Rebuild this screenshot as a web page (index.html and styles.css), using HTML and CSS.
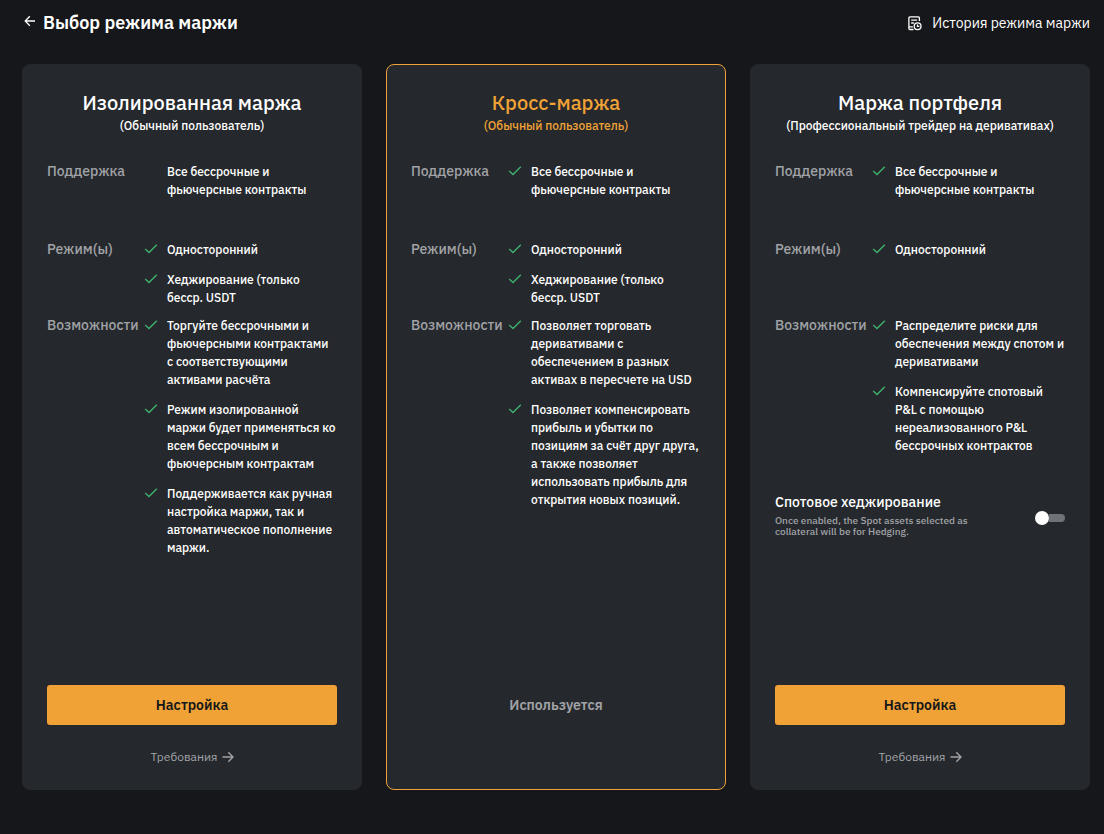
FILE: index.html
```html
<!DOCTYPE html>
<html lang="ru">
<head>
<meta charset="utf-8">
<meta name="viewport" content="width=device-width, initial-scale=1">
<title>Выбор режима маржи</title>
<link rel="stylesheet" href="styles.css">
</head>
<body>
<svg class="sprite" aria-hidden="true">
  <symbol id="check" viewBox="0 0 14 12"><path d="M1.2 6 5 9.6 12.8 1.8" fill="none" stroke="currentColor" stroke-width="1.4"/></symbol>
  <symbol id="arrow" viewBox="0 0 12 12"><path d="M.5 6h10.3M6.3 1.2 11 6 6.3 10.8" fill="none" stroke="currentColor" stroke-width="1.4"/></symbol>
</svg>
<header class="header">
  <div class="heading">
    <button class="back" type="button" aria-label="Назад"><svg viewBox="0 0 12 12"><path d="M11 6H1.4M5.8 1.2 1.2 6l4.6 4.8" fill="none" stroke="currentColor" stroke-width="1.3"/></svg></button>
    <h1 class="title">Выбор режима маржи</h1>
  </div>
  <a class="history" href="#history">
    <svg class="history-icon" viewBox="0 0 14 15" fill="none" stroke="currentColor" stroke-width="1.3"><path d="M11.4 5V1.9a1 1 0 0 0-1-1H1.9a1 1 0 0 0-1 1v10.6a1 1 0 0 0 1 1h3.6M.9 10.8h4M3.2 4.2h5.9M3.2 7h2.6"/><circle cx="9.6" cy="10.2" r="3.4"/><path d="M9.5 8.4v2h1.8"/></svg>
    История режима маржи
  </a>
</header>
<main class="cards">
  <section class="card">
    <h2 class="card-title">Изолированная маржа</h2>
    <p class="card-sub">(Обычный пользователь)</p>
    <div class="row row-support"><h3 class="label">Поддержка</h3><ul class="list"><li class="item">Все бессрочные и<br>фьючерсные контракты</li></ul></div>
    <div class="row row-modes"><h3 class="label">Режим(ы)</h3><ul class="list">
      <li class="item"><svg class="check"><use href="#check"/></svg>Односторонний</li>
      <li class="item"><svg class="check"><use href="#check"/></svg>Хеджирование (только<br>бесср. USDT</li></ul></div>
    <div class="row"><h3 class="label">Возможности</h3><ul class="list">
      <li class="item"><svg class="check"><use href="#check"/></svg>Торгуйте бессрочными и<br>фьючерсными контрактами<br>с соответствующими<br>активами расчёта</li>
      <li class="item"><svg class="check"><use href="#check"/></svg>Режим изолированной<br>маржи будет применяться ко<br>всем бессрочным и<br>фьючерсным контрактам</li>
      <li class="item"><svg class="check"><use href="#check"/></svg>Поддерживается как ручная<br>настройка маржи, так и<br>автоматическое пополнение<br>маржи.</li></ul></div>
    <footer class="card-footer">
      <button class="action" type="button">Настройка</button>
      <a class="more" href="#requirements">Требования<svg class="arrow"><use href="#arrow"/></svg></a>
    </footer>
  </section>
  <section class="card active">
    <h2 class="card-title">Кросс-маржа</h2>
    <p class="card-sub">(Обычный пользователь)</p>
    <div class="row row-support"><h3 class="label">Поддержка</h3><ul class="list"><li class="item"><svg class="check"><use href="#check"/></svg>Все бессрочные и<br>фьючерсные контракты</li></ul></div>
    <div class="row row-modes"><h3 class="label">Режим(ы)</h3><ul class="list">
      <li class="item"><svg class="check"><use href="#check"/></svg>Односторонний</li>
      <li class="item"><svg class="check"><use href="#check"/></svg>Хеджирование (только<br>бесср. USDT</li></ul></div>
    <div class="row"><h3 class="label">Возможности</h3><ul class="list">
      <li class="item"><svg class="check"><use href="#check"/></svg>Позволяет торговать<br>деривативами с<br>обеспечением в разных<br>активах в пересчете на USD</li>
      <li class="item"><svg class="check"><use href="#check"/></svg>Позволяет компенсировать<br>прибыль и убытки по<br>позициям за счёт друг друга,<br>а также позволяет<br>использовать прибыль для<br>открытия новых позиций.</li></ul></div>
    <footer class="card-footer">
      <button class="action current" type="button" disabled>Используется</button>
    </footer>
  </section>
  <section class="card">
    <h2 class="card-title">Маржа портфеля</h2>
    <p class="card-sub">(Профессиональный трейдер на деривативах)</p>
    <div class="row row-support"><h3 class="label">Поддержка</h3><ul class="list"><li class="item"><svg class="check"><use href="#check"/></svg>Все бессрочные и<br>фьючерсные контракты</li></ul></div>
    <div class="row row-modes"><h3 class="label">Режим(ы)</h3><ul class="list">
      <li class="item"><svg class="check"><use href="#check"/></svg>Односторонний</li></ul></div>
    <div class="row"><h3 class="label">Возможности</h3><ul class="list">
      <li class="item"><svg class="check"><use href="#check"/></svg>Распределите риски для<br>обеспечения между спотом и<br>деривативами</li>
      <li class="item"><svg class="check"><use href="#check"/></svg>Компенсируйте спотовый<br>P&amp;L с помощью<br>нереализованного P&amp;L<br>бессрочных контрактов</li></ul></div>
    <div class="hedging">
      <div>
        <label class="hedging-title" for="hedging">Спотовое хеджирование</label>
        <p class="hedging-note">Once enabled, the Spot assets selected as<br>collateral will be for Hedging.</p>
      </div>
      <input class="switch" id="hedging" type="checkbox" role="switch">
    </div>
    <footer class="card-footer">
      <button class="action" type="button">Настройка</button>
      <a class="more" href="#requirements">Требования<svg class="arrow"><use href="#arrow"/></svg></a>
    </footer>
  </section>
</main>
</body>
</html>
```
FILE: styles.css
```css
* { box-sizing: border-box; }
body {
  margin: 0;
  min-height: 100vh;
  display: flex;
  flex-direction: column;
  background: #16171a;
  color: #fff;
  font-family: "IBM Plex Sans", Inter, "Noto Sans", sans-serif;
  font-size: 12px;
  line-height: 18px;
}
h1, h2, h3, p, ul { margin: 0; padding: 0; }
a { color: inherit; text-decoration: none; }
button { font: inherit; border: 0; padding: 0; cursor: pointer; }
.sprite { position: absolute; width: 0; height: 0; }
.header {
  display: flex;
  justify-content: space-between;
  align-items: center;
  padding: 10px 14px 0 24px;
  height: 36px;
}
.heading { display: flex; align-items: center; gap: 7px; }
.back { width: 12px; height: 12px; margin-bottom: 4px; background: none; color: #fff; }
.back svg { display: block; width: 12px; height: 12px; }
.title { font-size: 18px; line-height: 26px; font-weight: 600; }
.history { display: flex; align-items: center; gap: 10px; font-size: 14px; line-height: 22px; }
.history-icon { width: 14px; height: 15px; }
.cards {
  flex: 1;
  display: grid;
  grid-template-columns: repeat(3, 1fr);
  gap: 24px;
  padding: 28px 14px 44px 22px;
}
.card {
  display: flex;
  flex-direction: column;
  padding: 24px;
  border: 1px solid #25282c;
  border-radius: 8px;
  background: #25282c;
}
.card.active { border-color: #f0a236; }
.card-title { font-size: 20px; line-height: 28px; font-weight: 500; text-align: center; }
.card-sub { margin-bottom: 28px; font-weight: 500; text-align: center; }
.active .card-title, .active .card-sub { color: #f0a236; }
.row { display: grid; grid-template-columns: 97px 1fr; }
.row-support { min-height: 78px; }
.row-modes { min-height: 76px; }
.label { color: #a1a3a7; font-size: 14px; line-height: 16px; font-weight: 500; }
.list { display: flex; flex-direction: column; gap: 12px; list-style: none; }
.item { position: relative; padding-left: 23px; font-weight: 500; white-space: nowrap; }
.check { position: absolute; left: 0; top: 2px; width: 14px; height: 12px; color: #3fb16f; }
.hedging { display: flex; justify-content: space-between; align-items: center; margin-top: 38px; }
.hedging-title { display: block; font-size: 14px; line-height: 18px; font-weight: 500; }
.hedging-note { margin-top: 4px; color: #a1a3a7; font-size: 10px; line-height: 11px; font-weight: 500; }
.switch {
  appearance: none;
  display: flex;
  align-items: center;
  width: 30px;
  height: 14px;
  margin: 6px 0 0;
  cursor: pointer;
}
.switch::before { content: ""; flex: none; width: 14px; height: 14px; border-radius: 50%; background: #fff; }
.switch::after { content: ""; flex: 1; height: 8px; border-radius: 0 4px 4px 0; background: #6f7278; }
.switch:checked { flex-direction: row-reverse; }
.switch:checked::after { border-radius: 4px 0 0 4px; background: #f0a236; }
.card-footer { min-height: 80px; margin-top: auto; display: flex; flex-direction: column; align-items: center; gap: 23px; }
.action { width: 100%; height: 40px; border-radius: 3px; background: #f0a236; color: #16171a; font-size: 14px; font-weight: 600; }
.action.current { background: none; color: #a1a3a7; cursor: default; }
.more { display: flex; align-items: center; gap: 4px; margin-bottom: -1px; color: #a1a3a7; }
.arrow { width: 12px; height: 12px; }
```
